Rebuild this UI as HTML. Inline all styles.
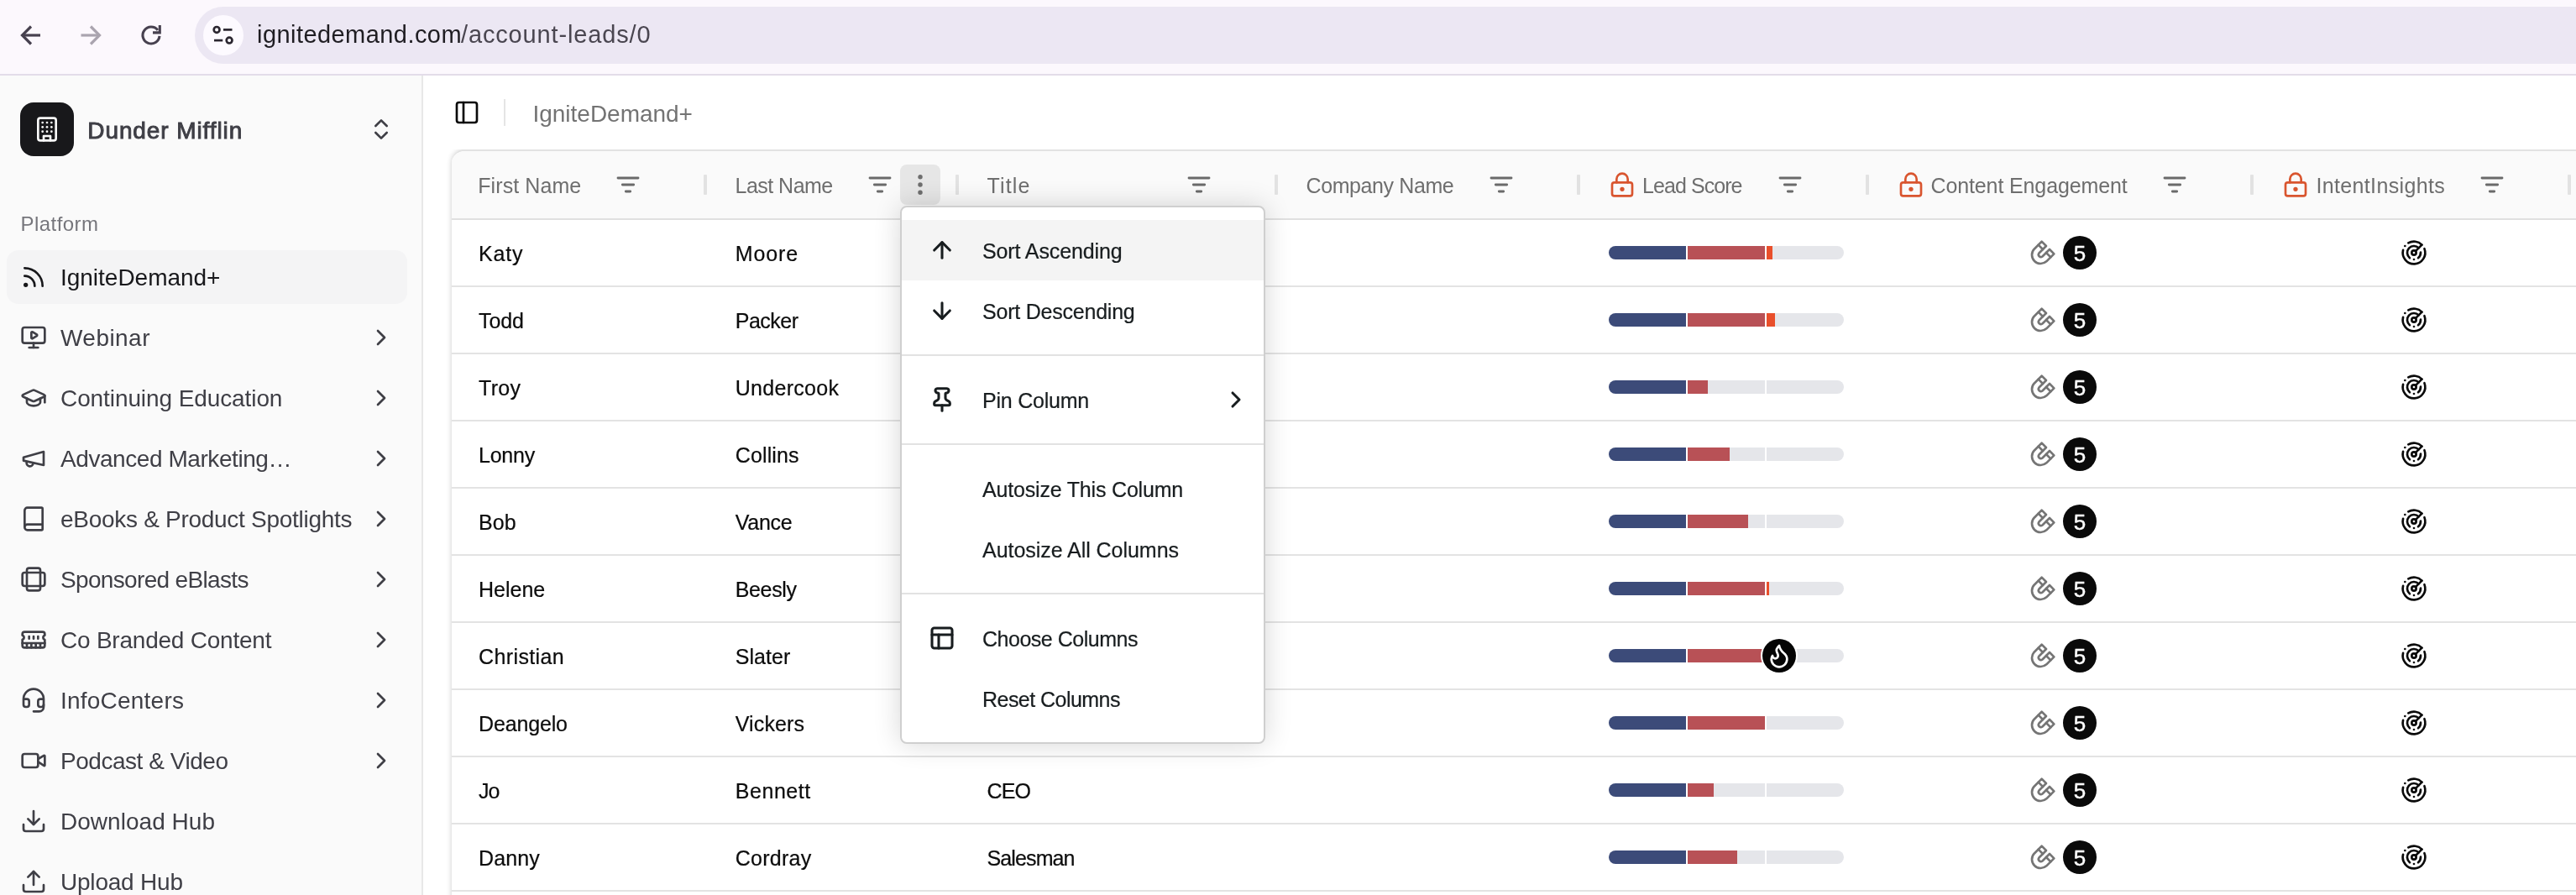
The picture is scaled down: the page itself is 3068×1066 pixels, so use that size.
<!DOCTYPE html>
<html><head><meta charset="utf-8"><title>IgniteDemand+</title>
<style>
html,body{margin:0;padding:0;}
body{width:3068px;height:1066px;overflow:hidden;position:relative;background:#fff;font-family:"Liberation Sans",sans-serif;}
.t{position:absolute;white-space:nowrap;}
.i{position:absolute;overflow:visible;}
.b{position:absolute;}
#root{position:absolute;left:0;top:0;width:3068px;height:1066px;overflow:hidden;will-change:transform;}
</style></head><body><div id="root">
<div class="b" style="left:0px;top:0px;width:3068px;height:88px;background:#fcf8fd;"></div>
<div class="b" style="left:0px;top:88px;width:3068px;height:2px;background:#e3dce9;"></div>
<div class="b" style="left:232px;top:8px;width:2900px;height:68px;background:#ece7f3;border-radius:34px;"></div>
<div class="b" style="left:242px;top:18px;width:48px;height:48px;background:#fdfaff;border-radius:24px;"></div>
<svg class="i" style="left:17px;top:22px" width="40" height="40" viewBox="0 0 40 40" fill="none" stroke="#47414f" stroke-width="3.2" stroke-linecap="butt" stroke-linejoin="miter"><path d="M31 20H10"/><path d="M20 9.500L9.500 20 20 30.500"/></svg>
<svg class="i" style="left:87.500px;top:22px" width="40" height="40" viewBox="0 0 40 40" fill="none" stroke="#aaa4af" stroke-width="3.2" stroke-linecap="butt" stroke-linejoin="miter"><path d="M8.500 20H30"/><path d="M20 9.500L30.500 20 20 30.500"/></svg>
<svg class="i" style="left:160px;top:22px" width="40" height="40" viewBox="0 0 40 40" fill="none" stroke="#47414f" stroke-width="3.100" stroke-linecap="butt" stroke-linejoin="miter"><path d="M29.960 20.870A10 10 0 1 1 27.880 13.840"/><path d="M30.300 8V16.900H22"/></svg>
<svg class="i" style="left:250px;top:26px" width="32" height="32" viewBox="0 0 32 32" fill="none" stroke="#2b2630" stroke-width="2.700" stroke-linecap="butt"><circle cx="8.100" cy="9.400" r="3.400"/><path d="M16 9.400h10.500"/><circle cx="23.100" cy="22.100" r="3.400"/><path d="M5 22.100h10.250"/></svg>
<div class="t" style="left:306.00px;top:21.45px;font-size:29px;line-height:41px;color:#1f1d22;letter-spacing:0.438px;">ignitedemand.com</div>
<div class="t" style="left:549.00px;top:21.45px;font-size:29px;line-height:41px;color:#4a4650;letter-spacing:0.848px;">/account-leads/0</div>
<div class="b" style="left:0px;top:90px;width:502px;height:976px;background:#fafafa;"></div>
<div class="b" style="left:502px;top:90px;width:2px;height:976px;background:#e8e8e8;"></div>
<div class="b" style="left:24px;top:122px;width:64px;height:64px;background:#18181b;border-radius:16px;"></div>
<svg class="i" style="left:40.00px;top:138.00px;" width="32" height="32" viewBox="0 0 24 24" fill="none" stroke="#fafafa" stroke-width="2" stroke-linecap="round" stroke-linejoin="round"><g><rect width="16" height="20" x="4" y="2" rx="2" ry="2"/><path d="M9 22v-4h6v4"/><path d="M8 6h.01"/><path d="M16 6h.01"/><path d="M12 6h.01"/><path d="M12 10h.01"/><path d="M12 14h.01"/><path d="M16 10h.01"/><path d="M16 14h.01"/><path d="M8 10h.01"/><path d="M8 14h.01"/></g></svg>
<div class="t" style="left:104.30px;top:135.80px;font-size:28px;line-height:39px;color:#3f3f46;letter-spacing:0.903px;-webkit-text-stroke:0.950px #3f3f46;">Dunder Mifflin</div>
<svg class="i" style="left:437.50px;top:138.00px;" width="32" height="32" viewBox="0 0 24 24" fill="none" stroke="#3f3f46" stroke-width="2" stroke-linecap="round" stroke-linejoin="round"><g><path d="m7 15 5 5 5-5"/><path d="m7 9 5-5 5 5"/></g></svg>
<div class="t" style="left:24.50px;top:249.93px;font-size:24px;line-height:34px;color:#76767c;letter-spacing:0.446px;">Platform</div>
<div class="b" style="left:8px;top:298px;width:477px;height:64px;background:#f4f4f5;border-radius:14px;"></div>
<svg class="i" style="left:24.00px;top:314.00px;" width="32" height="32" viewBox="0 0 24 24" fill="none" stroke="#18181b" stroke-width="2" stroke-linecap="round" stroke-linejoin="round"><g><path d="M4 11a9 9 0 0 1 9 9"/><path d="M4 4a16 16 0 0 1 16 16"/><circle cx="5" cy="19" r="1"/></g></svg>
<div class="t" style="left:72px;top:311.30px;font-size:28px;line-height:40px;color:#18181b;letter-spacing:-0.020px">IgniteDemand+</div>
<svg class="i" style="left:24.00px;top:386.00px;" width="32" height="32" viewBox="0 0 24 24" fill="none" stroke="#3f3f46" stroke-width="2" stroke-linecap="round" stroke-linejoin="round"><g><path d="M10 7.75a.75.75 0 0 1 1.142-.638l3.664 2.249a.75.75 0 0 1 0 1.278l-3.664 2.250a.75.75 0 0 1-1.142-.64z"/><path d="M12 17v4"/><path d="M8 21h8"/><rect x="2" y="3" width="20" height="14" rx="2"/></g></svg>
<div class="t" style="left:72px;top:383.30px;font-size:28px;line-height:40px;color:#3f3f46;letter-spacing:0.453px">Webinar</div>
<svg class="i" style="left:437.50px;top:386.00px;" width="32" height="32" viewBox="0 0 24 24" fill="none" stroke="#3f3f46" stroke-width="2" stroke-linecap="round" stroke-linejoin="round"><g><path d="m9 18 6-6-6-6"/></g></svg>
<svg class="i" style="left:24.00px;top:458.00px;" width="32" height="32" viewBox="0 0 24 24" fill="none" stroke="#3f3f46" stroke-width="2" stroke-linecap="round" stroke-linejoin="round"><g><path d="M21.42 10.922a1 1 0 0 0-.019-1.838L12.830 5.180a2 2 0 0 0-1.660 0L2.600 9.080a1 1 0 0 0 0 1.832l8.570 3.908a2 2 0 0 0 1.660 0z"/><path d="M22 10v6"/><path d="M6 12.500V16a6 3 0 0 0 12 0v-3.500"/></g></svg>
<div class="t" style="left:72px;top:455.30px;font-size:28px;line-height:40px;color:#3f3f46;letter-spacing:-0.092px">Continuing Education</div>
<svg class="i" style="left:437.50px;top:458.00px;" width="32" height="32" viewBox="0 0 24 24" fill="none" stroke="#3f3f46" stroke-width="2" stroke-linecap="round" stroke-linejoin="round"><g><path d="m9 18 6-6-6-6"/></g></svg>
<svg class="i" style="left:24.00px;top:530.00px;" width="32" height="32" viewBox="0 0 24 24" fill="none" stroke="#3f3f46" stroke-width="2" stroke-linecap="round" stroke-linejoin="round"><g><path d="m3 11 18-5v12L3 14v-3z"/><path d="M11.600 16.800a3 3 0 1 1-5.800-1.600"/></g></svg>
<div class="t" style="left:72px;top:527.30px;font-size:28px;line-height:40px;color:#3f3f46;letter-spacing:-0.434px">Advanced Marketing…</div>
<svg class="i" style="left:437.50px;top:530.00px;" width="32" height="32" viewBox="0 0 24 24" fill="none" stroke="#3f3f46" stroke-width="2" stroke-linecap="round" stroke-linejoin="round"><g><path d="m9 18 6-6-6-6"/></g></svg>
<svg class="i" style="left:24.00px;top:602.00px;" width="32" height="32" viewBox="0 0 24 24" fill="none" stroke="#3f3f46" stroke-width="2" stroke-linecap="round" stroke-linejoin="round"><g><path d="M4 19.500v-15A2.500 2.500 0 0 1 6.500 2H19a1 1 0 0 1 1 1v18a1 1 0 0 1-1 1H6.500a1 1 0 0 1 0-5H20"/></g></svg>
<div class="t" style="left:72px;top:599.30px;font-size:28px;line-height:40px;color:#3f3f46;letter-spacing:-0.285px">eBooks &amp; Product Spotlights</div>
<svg class="i" style="left:437.50px;top:602.00px;" width="32" height="32" viewBox="0 0 24 24" fill="none" stroke="#3f3f46" stroke-width="2" stroke-linecap="round" stroke-linejoin="round"><g><path d="m9 18 6-6-6-6"/></g></svg>
<svg class="i" style="left:24.00px;top:674.00px;" width="32" height="32" viewBox="0 0 24 24" fill="none" stroke="#3f3f46" stroke-width="2" stroke-linecap="round" stroke-linejoin="round"><g><rect width="12" height="20" x="6" y="2" rx="2"/><rect width="20" height="12" x="2" y="6" rx="2"/></g></svg>
<div class="t" style="left:72px;top:671.30px;font-size:28px;line-height:40px;color:#3f3f46;letter-spacing:-0.661px">Sponsored eBlasts</div>
<svg class="i" style="left:437.50px;top:674.00px;" width="32" height="32" viewBox="0 0 24 24" fill="none" stroke="#3f3f46" stroke-width="2" stroke-linecap="round" stroke-linejoin="round"><g><path d="m9 18 6-6-6-6"/></g></svg>
<svg class="i" style="left:24.00px;top:746.00px;" width="32" height="32" viewBox="0 0 24 24" fill="none" stroke="#3f3f46" stroke-width="2" stroke-linecap="round" stroke-linejoin="round"><g><path d="M6 19v-3"/><path d="M10 19v-3"/><path d="M14 19v-3"/><path d="M18 19v-3"/><path d="M8 11V9"/><path d="M16 11V9"/><path d="M12 11V9"/><path d="M2 15h20"/><path d="M2 7a2 2 0 0 1 2-2h16a2 2 0 0 1 2 2v1.100a2 2 0 0 0 0 3.837V17a2 2 0 0 1-2 2H4a2 2 0 0 1-2-2v-5.100a2 2 0 0 0 0-3.837Z"/></g></svg>
<div class="t" style="left:72px;top:743.30px;font-size:28px;line-height:40px;color:#3f3f46;letter-spacing:-0.226px">Co Branded Content</div>
<svg class="i" style="left:437.50px;top:746.00px;" width="32" height="32" viewBox="0 0 24 24" fill="none" stroke="#3f3f46" stroke-width="2" stroke-linecap="round" stroke-linejoin="round"><g><path d="m9 18 6-6-6-6"/></g></svg>
<svg class="i" style="left:24.00px;top:818.00px;" width="32" height="32" viewBox="0 0 24 24" fill="none" stroke="#3f3f46" stroke-width="2" stroke-linecap="round" stroke-linejoin="round"><g><path d="M3 11h3a2 2 0 0 1 2 2v3a2 2 0 0 1-2 2H5a2 2 0 0 1-2-2v-5Zm0 0a9 9 0 1 1 18 0m0 0v5a2 2 0 0 1-2 2h-1a2 2 0 0 1-2-2v-3a2 2 0 0 1 2-2h3Z"/><path d="M21 16v2a4 4 0 0 1-4 4h-5"/></g></svg>
<div class="t" style="left:72px;top:815.30px;font-size:28px;line-height:40px;color:#3f3f46;letter-spacing:0.222px">InfoCenters</div>
<svg class="i" style="left:437.50px;top:818.00px;" width="32" height="32" viewBox="0 0 24 24" fill="none" stroke="#3f3f46" stroke-width="2" stroke-linecap="round" stroke-linejoin="round"><g><path d="m9 18 6-6-6-6"/></g></svg>
<svg class="i" style="left:24.00px;top:890.00px;" width="32" height="32" viewBox="0 0 24 24" fill="none" stroke="#3f3f46" stroke-width="2" stroke-linecap="round" stroke-linejoin="round"><g><path d="m16 13 5.223 3.482a.5.5 0 0 0 .777-.416V7.870a.5.5 0 0 0-.752-.432L16 10.500"/><rect x="2" y="6" width="14" height="12" rx="2"/></g></svg>
<div class="t" style="left:72px;top:887.30px;font-size:28px;line-height:40px;color:#3f3f46;letter-spacing:-0.468px">Podcast &amp; Video</div>
<svg class="i" style="left:437.50px;top:890.00px;" width="32" height="32" viewBox="0 0 24 24" fill="none" stroke="#3f3f46" stroke-width="2" stroke-linecap="round" stroke-linejoin="round"><g><path d="m9 18 6-6-6-6"/></g></svg>
<svg class="i" style="left:24.00px;top:962.00px;" width="32" height="32" viewBox="0 0 24 24" fill="none" stroke="#3f3f46" stroke-width="2" stroke-linecap="round" stroke-linejoin="round"><g><path d="M21 15v4a2 2 0 0 1-2 2H5a2 2 0 0 1-2-2v-4"/><polyline points="7 10 12 15 17 10"/><line x1="12" x2="12" y1="15" y2="3"/></g></svg>
<div class="t" style="left:72px;top:959.30px;font-size:28px;line-height:40px;color:#3f3f46;letter-spacing:0.027px">Download Hub</div>
<svg class="i" style="left:24.00px;top:1034.00px;" width="32" height="32" viewBox="0 0 24 24" fill="none" stroke="#3f3f46" stroke-width="2" stroke-linecap="round" stroke-linejoin="round"><g><path d="M21 15v4a2 2 0 0 1-2 2H5a2 2 0 0 1-2-2v-4"/><polyline points="17 8 12 3 7 8"/><line x1="12" x2="12" y1="3" y2="15"/></g></svg>
<div class="t" style="left:72px;top:1031.30px;font-size:28px;line-height:40px;color:#3f3f46;letter-spacing:-0.212px">Upload Hub</div>
<svg class="i" style="left:539.75px;top:118.00px;" width="32" height="32" viewBox="0 0 24 24" fill="none" stroke="#0a0a0a" stroke-width="2" stroke-linecap="round" stroke-linejoin="round"><g><rect width="18" height="18" x="3" y="3" rx="2"/><path d="M9 3v18"/></g></svg>
<div class="b" style="left:600px;top:118px;width:2px;height:32px;background:#e5e5e5;"></div>
<div class="t" style="left:634.50px;top:115.80px;font-size:28px;line-height:39px;color:#737373;letter-spacing:-0.020px;">IgniteDemand+</div>
<div class="b" style="left:517px;top:178px;width:2600px;height:960px;clip-path:inset(0 0 0 0)"><div style="position:absolute;left:20.500px;top:0;width:2600px;height:960px;border-top:2px solid #e2e2e2;border-radius:16px 0 0 0;background:#fff;box-sizing:border-box;overflow:hidden;box-shadow:0 0 6px rgba(0,0,0,0.21)"><div style="height:80px;background:#fafafa;border-bottom:2px solid #e0e0e0"></div></div></div>
<div class="b" style="left:537.5px;top:340px;width:2600px;height:2px;background:#e3e3e3;"></div>
<div class="b" style="left:537.5px;top:420px;width:2600px;height:2px;background:#e3e3e3;"></div>
<div class="b" style="left:537.5px;top:500px;width:2600px;height:2px;background:#e3e3e3;"></div>
<div class="b" style="left:537.5px;top:580px;width:2600px;height:2px;background:#e3e3e3;"></div>
<div class="b" style="left:537.5px;top:660px;width:2600px;height:2px;background:#e3e3e3;"></div>
<div class="b" style="left:537.5px;top:740px;width:2600px;height:2px;background:#e3e3e3;"></div>
<div class="b" style="left:537.5px;top:820px;width:2600px;height:2px;background:#e3e3e3;"></div>
<div class="b" style="left:537.5px;top:900px;width:2600px;height:2px;background:#e3e3e3;"></div>
<div class="b" style="left:537.5px;top:980px;width:2600px;height:2px;background:#e3e3e3;"></div>
<div class="b" style="left:537.5px;top:1060px;width:2600px;height:2px;background:#e3e3e3;"></div>
<div class="t" style="left:569.25px;top:203.84px;font-size:25px;line-height:35px;color:#6e6e6e;letter-spacing:0.085px;">First Name</div>
<svg class="i" style="left:731.50px;top:203.50px;" width="32" height="32" viewBox="0 0 24 24" fill="none" stroke="#6a6a6a" stroke-width="2.15" stroke-linecap="round" stroke-linejoin="round"><g><path d="M3 6h18"/><path d="M7 12h10"/><path d="M10 18h4"/></g></svg>
<div class="t" style="left:875.50px;top:203.84px;font-size:25px;line-height:35px;color:#6e6e6e;letter-spacing:-0.520px;">Last Name</div>
<svg class="i" style="left:1031.50px;top:203.50px;" width="32" height="32" viewBox="0 0 24 24" fill="none" stroke="#6a6a6a" stroke-width="2.15" stroke-linecap="round" stroke-linejoin="round"><g><path d="M3 6h18"/><path d="M7 12h10"/><path d="M10 18h4"/></g></svg>
<div class="t" style="left:1175.50px;top:203.84px;font-size:25px;line-height:35px;color:#6e6e6e;letter-spacing:1.176px;">Title</div>
<svg class="i" style="left:1411.50px;top:203.50px;" width="32" height="32" viewBox="0 0 24 24" fill="none" stroke="#6a6a6a" stroke-width="2.15" stroke-linecap="round" stroke-linejoin="round"><g><path d="M3 6h18"/><path d="M7 12h10"/><path d="M10 18h4"/></g></svg>
<div class="t" style="left:1555.50px;top:203.84px;font-size:25px;line-height:35px;color:#6e6e6e;letter-spacing:-0.399px;">Company Name</div>
<svg class="i" style="left:1772.00px;top:203.50px;" width="32" height="32" viewBox="0 0 24 24" fill="none" stroke="#6a6a6a" stroke-width="2.15" stroke-linecap="round" stroke-linejoin="round"><g><path d="M3 6h18"/><path d="M7 12h10"/><path d="M10 18h4"/></g></svg>
<div class="t" style="left:1956.00px;top:203.84px;font-size:25px;line-height:35px;color:#6e6e6e;letter-spacing:-0.932px;">Lead Score</div>
<svg class="i" style="left:2115.50px;top:203.50px;" width="32" height="32" viewBox="0 0 24 24" fill="none" stroke="#6a6a6a" stroke-width="2.15" stroke-linecap="round" stroke-linejoin="round"><g><path d="M3 6h18"/><path d="M7 12h10"/><path d="M10 18h4"/></g></svg>
<svg class="i" style="left:1915.50px;top:203.50px;" width="32" height="32" viewBox="0 0 24 24" fill="none" stroke="#d9552f" stroke-width="2" stroke-linecap="round" stroke-linejoin="round"><g><circle cx="12" cy="16" r="1"/><rect x="3" y="10" width="18" height="12" rx="2"/><path d="M7 10V7a5 5 0 0 1 10 0v3"/></g></svg>
<div class="t" style="left:2299.50px;top:203.84px;font-size:25px;line-height:35px;color:#6e6e6e;letter-spacing:-0.122px;">Content Engagement</div>
<svg class="i" style="left:2574.00px;top:203.50px;" width="32" height="32" viewBox="0 0 24 24" fill="none" stroke="#6a6a6a" stroke-width="2.15" stroke-linecap="round" stroke-linejoin="round"><g><path d="M3 6h18"/><path d="M7 12h10"/><path d="M10 18h4"/></g></svg>
<svg class="i" style="left:2260.25px;top:203.50px;" width="32" height="32" viewBox="0 0 24 24" fill="none" stroke="#d9552f" stroke-width="2" stroke-linecap="round" stroke-linejoin="round"><g><circle cx="12" cy="16" r="1"/><rect x="3" y="10" width="18" height="12" rx="2"/><path d="M7 10V7a5 5 0 0 1 10 0v3"/></g></svg>
<div class="t" style="left:2758.50px;top:203.84px;font-size:25px;line-height:35px;color:#6e6e6e;letter-spacing:0.346px;">IntentInsights</div>
<svg class="i" style="left:2951.50px;top:203.50px;" width="32" height="32" viewBox="0 0 24 24" fill="none" stroke="#6a6a6a" stroke-width="2.15" stroke-linecap="round" stroke-linejoin="round"><g><path d="M3 6h18"/><path d="M7 12h10"/><path d="M10 18h4"/></g></svg>
<svg class="i" style="left:2717.50px;top:203.50px;" width="32" height="32" viewBox="0 0 24 24" fill="none" stroke="#d9552f" stroke-width="2" stroke-linecap="round" stroke-linejoin="round"><g><circle cx="12" cy="16" r="1"/><rect x="3" y="10" width="18" height="12" rx="2"/><path d="M7 10V7a5 5 0 0 1 10 0v3"/></g></svg>
<div class="b" style="left:837.75px;top:208px;width:4px;height:24px;background:#e2e2e2;border-radius:1px;"></div>
<div class="b" style="left:1137.75px;top:208px;width:4px;height:24px;background:#e2e2e2;border-radius:1px;"></div>
<div class="b" style="left:1517.75px;top:208px;width:4px;height:24px;background:#e2e2e2;border-radius:1px;"></div>
<div class="b" style="left:1877.75px;top:208px;width:4px;height:24px;background:#e2e2e2;border-radius:1px;"></div>
<div class="b" style="left:2221.5px;top:208px;width:4px;height:24px;background:#e2e2e2;border-radius:1px;"></div>
<div class="b" style="left:2680px;top:208px;width:4px;height:24px;background:#e2e2e2;border-radius:1px;"></div>
<div class="b" style="left:3057.75px;top:208px;width:4px;height:24px;background:#e2e2e2;border-radius:1px;"></div>
<div class="b" style="left:1072px;top:196px;width:48px;height:48px;background:#e6e6e6;border-radius:8px;"></div>
<svg class="i" style="left:1079.50px;top:204.00px;" width="32" height="32" viewBox="0 0 24 24" fill="none" stroke="#6e6e6e" stroke-width="2.1" stroke-linecap="round" stroke-linejoin="round"><g><circle cx="12" cy="12" r="1"/><circle cx="12" cy="5" r="1"/><circle cx="12" cy="19" r="1"/></g></svg>
<div class="t" style="left:570.00px;top:284.59px;font-size:25px;line-height:35px;color:#0c0c0c;letter-spacing:0.823px;-webkit-text-stroke:0.220px currentColor;">Katy</div>
<div class="t" style="left:875.75px;top:284.59px;font-size:25px;line-height:35px;color:#0c0c0c;letter-spacing:0.906px;-webkit-text-stroke:0.220px currentColor;">Moore</div>
<div class="b" style="left:1915.75px;top:292.5px;width:280px;height:16px;border-radius:8px;overflow:hidden;background:#fff"><div style="position:absolute;left:0;top:0;width:92px;height:16px;background:#3c4b79"></div><div style="position:absolute;left:94px;top:0;width:92px;height:16px;background:#e5e6ea"></div><div style="position:absolute;left:94px;top:0;width:92px;height:16px;background:#b85156"></div><div style="position:absolute;left:188px;top:0;width:92px;height:16px;background:#e5e6ea"></div><div style="position:absolute;left:188px;top:0;width:7.5px;height:16px;background:#e94f2b"></div></div>
<svg class="i" style="left:2417.00px;top:284.50px;" width="32" height="32" viewBox="0 0 24 24" fill="none" stroke="#757575" stroke-width="2" stroke-linecap="round" stroke-linejoin="round"><g transform="rotate(180 12 12)"><path d="m6 15-4-4 6.750-6.770a7.790 7.790 0 0 1 11 11L13 22l-4-4 6.390-6.360a2.140 2.140 0 0 0-3-3L6 15"/><path d="m5 8 4 4"/><path d="m12 15 4 4"/></g></svg>
<div class="b" style="left:2457px;top:280.5px;width:40px;height:40px;background:#0a0a0a;border-radius:20px;"></div>
<div class="t" style="left:2457px;top:280.5px;width:40px;text-align:center;font-size:26px;line-height:42px;color:#fff;-webkit-text-stroke:0.450px #fff">5</div>
<svg class="i" style="left:2858.50px;top:284.50px;" width="32" height="32" viewBox="0 0 24 24" fill="none" stroke="#0a0a0a" stroke-width="2" stroke-linecap="round" stroke-linejoin="round"><g><path d="M19.070 4.930A10 10 0 0 0 6.990 3.340"/><path d="M4 6h.01"/><path d="M2.290 9.620A10 10 0 1 0 21.310 8.350"/><path d="M16.240 7.760A6 6 0 1 0 8.230 16.670"/><path d="M12 18h.01"/><path d="M17.990 11.660A6 6 0 0 1 15.770 16.670"/><circle cx="12" cy="12" r="2"/><path d="m13.410 10.590 5.660-5.660"/></g></svg>
<div class="t" style="left:570.00px;top:364.59px;font-size:25px;line-height:35px;color:#0c0c0c;letter-spacing:-0.073px;-webkit-text-stroke:0.220px currentColor;">Todd</div>
<div class="t" style="left:875.75px;top:364.59px;font-size:25px;line-height:35px;color:#0c0c0c;letter-spacing:-0.512px;-webkit-text-stroke:0.220px currentColor;">Packer</div>
<div class="b" style="left:1915.75px;top:372.5px;width:280px;height:16px;border-radius:8px;overflow:hidden;background:#fff"><div style="position:absolute;left:0;top:0;width:92px;height:16px;background:#3c4b79"></div><div style="position:absolute;left:94px;top:0;width:92px;height:16px;background:#e5e6ea"></div><div style="position:absolute;left:94px;top:0;width:92px;height:16px;background:#b85156"></div><div style="position:absolute;left:188px;top:0;width:92px;height:16px;background:#e5e6ea"></div><div style="position:absolute;left:188px;top:0;width:10px;height:16px;background:#e94f2b"></div></div>
<svg class="i" style="left:2417.00px;top:364.50px;" width="32" height="32" viewBox="0 0 24 24" fill="none" stroke="#757575" stroke-width="2" stroke-linecap="round" stroke-linejoin="round"><g transform="rotate(180 12 12)"><path d="m6 15-4-4 6.750-6.770a7.790 7.790 0 0 1 11 11L13 22l-4-4 6.390-6.360a2.140 2.140 0 0 0-3-3L6 15"/><path d="m5 8 4 4"/><path d="m12 15 4 4"/></g></svg>
<div class="b" style="left:2457px;top:360.5px;width:40px;height:40px;background:#0a0a0a;border-radius:20px;"></div>
<div class="t" style="left:2457px;top:360.5px;width:40px;text-align:center;font-size:26px;line-height:42px;color:#fff;-webkit-text-stroke:0.450px #fff">5</div>
<svg class="i" style="left:2858.50px;top:364.50px;" width="32" height="32" viewBox="0 0 24 24" fill="none" stroke="#0a0a0a" stroke-width="2" stroke-linecap="round" stroke-linejoin="round"><g><path d="M19.070 4.930A10 10 0 0 0 6.990 3.340"/><path d="M4 6h.01"/><path d="M2.290 9.620A10 10 0 1 0 21.310 8.350"/><path d="M16.240 7.760A6 6 0 1 0 8.230 16.670"/><path d="M12 18h.01"/><path d="M17.990 11.660A6 6 0 0 1 15.770 16.670"/><circle cx="12" cy="12" r="2"/><path d="m13.410 10.590 5.660-5.660"/></g></svg>
<div class="t" style="left:570.00px;top:444.59px;font-size:25px;line-height:35px;color:#0c0c0c;letter-spacing:0.307px;-webkit-text-stroke:0.220px currentColor;">Troy</div>
<div class="t" style="left:875.75px;top:444.59px;font-size:25px;line-height:35px;color:#0c0c0c;letter-spacing:0.293px;-webkit-text-stroke:0.220px currentColor;">Undercook</div>
<div class="b" style="left:1915.75px;top:452.5px;width:280px;height:16px;border-radius:8px;overflow:hidden;background:#fff"><div style="position:absolute;left:0;top:0;width:92px;height:16px;background:#3c4b79"></div><div style="position:absolute;left:94px;top:0;width:92px;height:16px;background:#e5e6ea"></div><div style="position:absolute;left:94px;top:0;width:24px;height:16px;background:#b85156"></div><div style="position:absolute;left:188px;top:0;width:92px;height:16px;background:#e5e6ea"></div></div>
<svg class="i" style="left:2417.00px;top:444.50px;" width="32" height="32" viewBox="0 0 24 24" fill="none" stroke="#757575" stroke-width="2" stroke-linecap="round" stroke-linejoin="round"><g transform="rotate(180 12 12)"><path d="m6 15-4-4 6.750-6.770a7.790 7.790 0 0 1 11 11L13 22l-4-4 6.390-6.360a2.140 2.140 0 0 0-3-3L6 15"/><path d="m5 8 4 4"/><path d="m12 15 4 4"/></g></svg>
<div class="b" style="left:2457px;top:440.5px;width:40px;height:40px;background:#0a0a0a;border-radius:20px;"></div>
<div class="t" style="left:2457px;top:440.5px;width:40px;text-align:center;font-size:26px;line-height:42px;color:#fff;-webkit-text-stroke:0.450px #fff">5</div>
<svg class="i" style="left:2858.50px;top:444.50px;" width="32" height="32" viewBox="0 0 24 24" fill="none" stroke="#0a0a0a" stroke-width="2" stroke-linecap="round" stroke-linejoin="round"><g><path d="M19.070 4.930A10 10 0 0 0 6.990 3.340"/><path d="M4 6h.01"/><path d="M2.290 9.620A10 10 0 1 0 21.310 8.350"/><path d="M16.240 7.760A6 6 0 1 0 8.230 16.670"/><path d="M12 18h.01"/><path d="M17.990 11.660A6 6 0 0 1 15.770 16.670"/><circle cx="12" cy="12" r="2"/><path d="m13.410 10.590 5.660-5.660"/></g></svg>
<div class="t" style="left:570.00px;top:524.59px;font-size:25px;line-height:35px;color:#0c0c0c;letter-spacing:-0.219px;-webkit-text-stroke:0.220px currentColor;">Lonny</div>
<div class="t" style="left:875.75px;top:524.59px;font-size:25px;line-height:35px;color:#0c0c0c;letter-spacing:0.125px;-webkit-text-stroke:0.220px currentColor;">Collins</div>
<div class="b" style="left:1915.75px;top:532.5px;width:280px;height:16px;border-radius:8px;overflow:hidden;background:#fff"><div style="position:absolute;left:0;top:0;width:92px;height:16px;background:#3c4b79"></div><div style="position:absolute;left:94px;top:0;width:92px;height:16px;background:#e5e6ea"></div><div style="position:absolute;left:94px;top:0;width:50px;height:16px;background:#b85156"></div><div style="position:absolute;left:188px;top:0;width:92px;height:16px;background:#e5e6ea"></div></div>
<svg class="i" style="left:2417.00px;top:524.50px;" width="32" height="32" viewBox="0 0 24 24" fill="none" stroke="#757575" stroke-width="2" stroke-linecap="round" stroke-linejoin="round"><g transform="rotate(180 12 12)"><path d="m6 15-4-4 6.750-6.770a7.790 7.790 0 0 1 11 11L13 22l-4-4 6.390-6.360a2.140 2.140 0 0 0-3-3L6 15"/><path d="m5 8 4 4"/><path d="m12 15 4 4"/></g></svg>
<div class="b" style="left:2457px;top:520.5px;width:40px;height:40px;background:#0a0a0a;border-radius:20px;"></div>
<div class="t" style="left:2457px;top:520.5px;width:40px;text-align:center;font-size:26px;line-height:42px;color:#fff;-webkit-text-stroke:0.450px #fff">5</div>
<svg class="i" style="left:2858.50px;top:524.50px;" width="32" height="32" viewBox="0 0 24 24" fill="none" stroke="#0a0a0a" stroke-width="2" stroke-linecap="round" stroke-linejoin="round"><g><path d="M19.070 4.930A10 10 0 0 0 6.990 3.340"/><path d="M4 6h.01"/><path d="M2.290 9.620A10 10 0 1 0 21.310 8.350"/><path d="M16.240 7.760A6 6 0 1 0 8.230 16.670"/><path d="M12 18h.01"/><path d="M17.990 11.660A6 6 0 0 1 15.770 16.670"/><circle cx="12" cy="12" r="2"/><path d="m13.410 10.590 5.660-5.660"/></g></svg>
<div class="t" style="left:570.00px;top:604.59px;font-size:25px;line-height:35px;color:#0c0c0c;letter-spacing:0.133px;-webkit-text-stroke:0.220px currentColor;">Bob</div>
<div class="t" style="left:875.75px;top:604.59px;font-size:25px;line-height:35px;color:#0c0c0c;letter-spacing:-0.258px;-webkit-text-stroke:0.220px currentColor;">Vance</div>
<div class="b" style="left:1915.75px;top:612.5px;width:280px;height:16px;border-radius:8px;overflow:hidden;background:#fff"><div style="position:absolute;left:0;top:0;width:92px;height:16px;background:#3c4b79"></div><div style="position:absolute;left:94px;top:0;width:92px;height:16px;background:#e5e6ea"></div><div style="position:absolute;left:94px;top:0;width:72px;height:16px;background:#b85156"></div><div style="position:absolute;left:188px;top:0;width:92px;height:16px;background:#e5e6ea"></div></div>
<svg class="i" style="left:2417.00px;top:604.50px;" width="32" height="32" viewBox="0 0 24 24" fill="none" stroke="#757575" stroke-width="2" stroke-linecap="round" stroke-linejoin="round"><g transform="rotate(180 12 12)"><path d="m6 15-4-4 6.750-6.770a7.790 7.790 0 0 1 11 11L13 22l-4-4 6.390-6.360a2.140 2.140 0 0 0-3-3L6 15"/><path d="m5 8 4 4"/><path d="m12 15 4 4"/></g></svg>
<div class="b" style="left:2457px;top:600.5px;width:40px;height:40px;background:#0a0a0a;border-radius:20px;"></div>
<div class="t" style="left:2457px;top:600.5px;width:40px;text-align:center;font-size:26px;line-height:42px;color:#fff;-webkit-text-stroke:0.450px #fff">5</div>
<svg class="i" style="left:2858.50px;top:604.50px;" width="32" height="32" viewBox="0 0 24 24" fill="none" stroke="#0a0a0a" stroke-width="2" stroke-linecap="round" stroke-linejoin="round"><g><path d="M19.070 4.930A10 10 0 0 0 6.990 3.340"/><path d="M4 6h.01"/><path d="M2.290 9.620A10 10 0 1 0 21.310 8.350"/><path d="M16.240 7.760A6 6 0 1 0 8.230 16.670"/><path d="M12 18h.01"/><path d="M17.990 11.660A6 6 0 0 1 15.770 16.670"/><circle cx="12" cy="12" r="2"/><path d="m13.410 10.590 5.660-5.660"/></g></svg>
<div class="t" style="left:570.00px;top:684.59px;font-size:25px;line-height:35px;color:#0c0c0c;letter-spacing:0.006px;-webkit-text-stroke:0.220px currentColor;">Helene</div>
<div class="t" style="left:875.75px;top:684.59px;font-size:25px;line-height:35px;color:#0c0c0c;letter-spacing:-0.356px;-webkit-text-stroke:0.220px currentColor;">Beesly</div>
<div class="b" style="left:1915.75px;top:692.5px;width:280px;height:16px;border-radius:8px;overflow:hidden;background:#fff"><div style="position:absolute;left:0;top:0;width:92px;height:16px;background:#3c4b79"></div><div style="position:absolute;left:94px;top:0;width:92px;height:16px;background:#e5e6ea"></div><div style="position:absolute;left:94px;top:0;width:92px;height:16px;background:#b85156"></div><div style="position:absolute;left:188px;top:0;width:92px;height:16px;background:#e5e6ea"></div><div style="position:absolute;left:188px;top:0;width:3px;height:16px;background:#e94f2b"></div></div>
<svg class="i" style="left:2417.00px;top:684.50px;" width="32" height="32" viewBox="0 0 24 24" fill="none" stroke="#757575" stroke-width="2" stroke-linecap="round" stroke-linejoin="round"><g transform="rotate(180 12 12)"><path d="m6 15-4-4 6.750-6.770a7.790 7.790 0 0 1 11 11L13 22l-4-4 6.390-6.360a2.140 2.140 0 0 0-3-3L6 15"/><path d="m5 8 4 4"/><path d="m12 15 4 4"/></g></svg>
<div class="b" style="left:2457px;top:680.5px;width:40px;height:40px;background:#0a0a0a;border-radius:20px;"></div>
<div class="t" style="left:2457px;top:680.5px;width:40px;text-align:center;font-size:26px;line-height:42px;color:#fff;-webkit-text-stroke:0.450px #fff">5</div>
<svg class="i" style="left:2858.50px;top:684.50px;" width="32" height="32" viewBox="0 0 24 24" fill="none" stroke="#0a0a0a" stroke-width="2" stroke-linecap="round" stroke-linejoin="round"><g><path d="M19.070 4.930A10 10 0 0 0 6.990 3.340"/><path d="M4 6h.01"/><path d="M2.290 9.620A10 10 0 1 0 21.310 8.350"/><path d="M16.240 7.760A6 6 0 1 0 8.230 16.670"/><path d="M12 18h.01"/><path d="M17.990 11.660A6 6 0 0 1 15.770 16.670"/><circle cx="12" cy="12" r="2"/><path d="m13.410 10.590 5.660-5.660"/></g></svg>
<div class="t" style="left:570.00px;top:764.59px;font-size:25px;line-height:35px;color:#0c0c0c;letter-spacing:0.389px;-webkit-text-stroke:0.220px currentColor;">Christian</div>
<div class="t" style="left:875.75px;top:764.59px;font-size:25px;line-height:35px;color:#0c0c0c;letter-spacing:0.037px;-webkit-text-stroke:0.220px currentColor;">Slater</div>
<div class="b" style="left:1915.75px;top:772.5px;width:280px;height:16px;border-radius:8px;overflow:hidden;background:#fff"><div style="position:absolute;left:0;top:0;width:92px;height:16px;background:#3c4b79"></div><div style="position:absolute;left:94px;top:0;width:92px;height:16px;background:#e5e6ea"></div><div style="position:absolute;left:94px;top:0;width:92px;height:16px;background:#b85156"></div><div style="position:absolute;left:188px;top:0;width:92px;height:16px;background:#e5e6ea"></div></div>
<div class="b" style="left:2096.5px;top:758.5px;width:44px;height:44px;background:#fff;border-radius:22px;"></div>
<div class="b" style="left:2098.5px;top:760.5px;width:40px;height:40px;background:#050505;border-radius:20px;"></div>
<svg class="i" style="left:2102.50px;top:764.50px;" width="32" height="32" viewBox="0 0 24 24" fill="none" stroke="#fff" stroke-width="2" stroke-linecap="round" stroke-linejoin="round"><g><path d="M8.5 14.5A2.5 2.5 0 0 0 11 12c0-1.38-.5-2-1-3-1.072-2.143-.224-4.054 2-6 .5 2.5 2 4.9 4 6.5 2 1.6 3 3.5 3 5.5a7 7 0 1 1-14 0c0-1.153.433-2.294 1-3a2.500 2.500 0 0 0 2.500 2.500z"/></g></svg>
<svg class="i" style="left:2417.00px;top:764.50px;" width="32" height="32" viewBox="0 0 24 24" fill="none" stroke="#757575" stroke-width="2" stroke-linecap="round" stroke-linejoin="round"><g transform="rotate(180 12 12)"><path d="m6 15-4-4 6.750-6.770a7.790 7.790 0 0 1 11 11L13 22l-4-4 6.390-6.360a2.140 2.140 0 0 0-3-3L6 15"/><path d="m5 8 4 4"/><path d="m12 15 4 4"/></g></svg>
<div class="b" style="left:2457px;top:760.5px;width:40px;height:40px;background:#0a0a0a;border-radius:20px;"></div>
<div class="t" style="left:2457px;top:760.5px;width:40px;text-align:center;font-size:26px;line-height:42px;color:#fff;-webkit-text-stroke:0.450px #fff">5</div>
<svg class="i" style="left:2858.50px;top:764.50px;" width="32" height="32" viewBox="0 0 24 24" fill="none" stroke="#0a0a0a" stroke-width="2" stroke-linecap="round" stroke-linejoin="round"><g><path d="M19.070 4.930A10 10 0 0 0 6.990 3.340"/><path d="M4 6h.01"/><path d="M2.290 9.620A10 10 0 1 0 21.310 8.350"/><path d="M16.240 7.760A6 6 0 1 0 8.230 16.670"/><path d="M12 18h.01"/><path d="M17.990 11.660A6 6 0 0 1 15.770 16.670"/><circle cx="12" cy="12" r="2"/><path d="m13.410 10.590 5.660-5.660"/></g></svg>
<div class="t" style="left:570.00px;top:844.59px;font-size:25px;line-height:35px;color:#0c0c0c;letter-spacing:-0.147px;-webkit-text-stroke:0.220px currentColor;">Deangelo</div>
<div class="t" style="left:875.75px;top:844.59px;font-size:25px;line-height:35px;color:#0c0c0c;letter-spacing:0.125px;-webkit-text-stroke:0.220px currentColor;">Vickers</div>
<div class="b" style="left:1915.75px;top:852.5px;width:280px;height:16px;border-radius:8px;overflow:hidden;background:#fff"><div style="position:absolute;left:0;top:0;width:92px;height:16px;background:#3c4b79"></div><div style="position:absolute;left:94px;top:0;width:92px;height:16px;background:#e5e6ea"></div><div style="position:absolute;left:94px;top:0;width:92px;height:16px;background:#b85156"></div><div style="position:absolute;left:188px;top:0;width:92px;height:16px;background:#e5e6ea"></div></div>
<svg class="i" style="left:2417.00px;top:844.50px;" width="32" height="32" viewBox="0 0 24 24" fill="none" stroke="#757575" stroke-width="2" stroke-linecap="round" stroke-linejoin="round"><g transform="rotate(180 12 12)"><path d="m6 15-4-4 6.750-6.770a7.790 7.790 0 0 1 11 11L13 22l-4-4 6.390-6.360a2.140 2.140 0 0 0-3-3L6 15"/><path d="m5 8 4 4"/><path d="m12 15 4 4"/></g></svg>
<div class="b" style="left:2457px;top:840.5px;width:40px;height:40px;background:#0a0a0a;border-radius:20px;"></div>
<div class="t" style="left:2457px;top:840.5px;width:40px;text-align:center;font-size:26px;line-height:42px;color:#fff;-webkit-text-stroke:0.450px #fff">5</div>
<svg class="i" style="left:2858.50px;top:844.50px;" width="32" height="32" viewBox="0 0 24 24" fill="none" stroke="#0a0a0a" stroke-width="2" stroke-linecap="round" stroke-linejoin="round"><g><path d="M19.070 4.930A10 10 0 0 0 6.990 3.340"/><path d="M4 6h.01"/><path d="M2.290 9.620A10 10 0 1 0 21.310 8.350"/><path d="M16.240 7.760A6 6 0 1 0 8.230 16.670"/><path d="M12 18h.01"/><path d="M17.990 11.660A6 6 0 0 1 15.770 16.670"/><circle cx="12" cy="12" r="2"/><path d="m13.410 10.590 5.660-5.660"/></g></svg>
<div class="t" style="left:570.00px;top:924.59px;font-size:25px;line-height:35px;color:#0c0c0c;letter-spacing:-0.906px;-webkit-text-stroke:0.220px currentColor;">Jo</div>
<div class="t" style="left:875.75px;top:924.59px;font-size:25px;line-height:35px;color:#0c0c0c;letter-spacing:0.549px;-webkit-text-stroke:0.220px currentColor;">Bennett</div>
<div class="t" style="left:1175.50px;top:924.59px;font-size:25px;line-height:35px;color:#0c0c0c;letter-spacing:-0.836px;-webkit-text-stroke:0.220px currentColor;">CEO</div>
<div class="b" style="left:1915.75px;top:932.5px;width:280px;height:16px;border-radius:8px;overflow:hidden;background:#fff"><div style="position:absolute;left:0;top:0;width:92px;height:16px;background:#3c4b79"></div><div style="position:absolute;left:94px;top:0;width:92px;height:16px;background:#e5e6ea"></div><div style="position:absolute;left:94px;top:0;width:31px;height:16px;background:#b85156"></div><div style="position:absolute;left:188px;top:0;width:92px;height:16px;background:#e5e6ea"></div></div>
<svg class="i" style="left:2417.00px;top:924.50px;" width="32" height="32" viewBox="0 0 24 24" fill="none" stroke="#757575" stroke-width="2" stroke-linecap="round" stroke-linejoin="round"><g transform="rotate(180 12 12)"><path d="m6 15-4-4 6.750-6.770a7.790 7.790 0 0 1 11 11L13 22l-4-4 6.390-6.360a2.140 2.140 0 0 0-3-3L6 15"/><path d="m5 8 4 4"/><path d="m12 15 4 4"/></g></svg>
<div class="b" style="left:2457px;top:920.5px;width:40px;height:40px;background:#0a0a0a;border-radius:20px;"></div>
<div class="t" style="left:2457px;top:920.5px;width:40px;text-align:center;font-size:26px;line-height:42px;color:#fff;-webkit-text-stroke:0.450px #fff">5</div>
<svg class="i" style="left:2858.50px;top:924.50px;" width="32" height="32" viewBox="0 0 24 24" fill="none" stroke="#0a0a0a" stroke-width="2" stroke-linecap="round" stroke-linejoin="round"><g><path d="M19.070 4.930A10 10 0 0 0 6.990 3.340"/><path d="M4 6h.01"/><path d="M2.290 9.620A10 10 0 1 0 21.310 8.350"/><path d="M16.240 7.760A6 6 0 1 0 8.230 16.670"/><path d="M12 18h.01"/><path d="M17.990 11.660A6 6 0 0 1 15.770 16.670"/><circle cx="12" cy="12" r="2"/><path d="m13.410 10.590 5.660-5.660"/></g></svg>
<div class="t" style="left:570.00px;top:1004.59px;font-size:25px;line-height:35px;color:#0c0c0c;letter-spacing:0.121px;-webkit-text-stroke:0.220px currentColor;">Danny</div>
<div class="t" style="left:875.75px;top:1004.59px;font-size:25px;line-height:35px;color:#0c0c0c;letter-spacing:0.263px;-webkit-text-stroke:0.220px currentColor;">Cordray</div>
<div class="t" style="left:1175.50px;top:1004.59px;font-size:25px;line-height:35px;color:#0c0c0c;letter-spacing:-0.882px;-webkit-text-stroke:0.220px currentColor;">Salesman</div>
<div class="b" style="left:1915.75px;top:1012.5px;width:280px;height:16px;border-radius:8px;overflow:hidden;background:#fff"><div style="position:absolute;left:0;top:0;width:92px;height:16px;background:#3c4b79"></div><div style="position:absolute;left:94px;top:0;width:92px;height:16px;background:#e5e6ea"></div><div style="position:absolute;left:94px;top:0;width:59px;height:16px;background:#b85156"></div><div style="position:absolute;left:188px;top:0;width:92px;height:16px;background:#e5e6ea"></div></div>
<svg class="i" style="left:2417.00px;top:1004.50px;" width="32" height="32" viewBox="0 0 24 24" fill="none" stroke="#757575" stroke-width="2" stroke-linecap="round" stroke-linejoin="round"><g transform="rotate(180 12 12)"><path d="m6 15-4-4 6.750-6.770a7.790 7.790 0 0 1 11 11L13 22l-4-4 6.390-6.360a2.140 2.140 0 0 0-3-3L6 15"/><path d="m5 8 4 4"/><path d="m12 15 4 4"/></g></svg>
<div class="b" style="left:2457px;top:1000.5px;width:40px;height:40px;background:#0a0a0a;border-radius:20px;"></div>
<div class="t" style="left:2457px;top:1000.5px;width:40px;text-align:center;font-size:26px;line-height:42px;color:#fff;-webkit-text-stroke:0.450px #fff">5</div>
<svg class="i" style="left:2858.50px;top:1004.50px;" width="32" height="32" viewBox="0 0 24 24" fill="none" stroke="#0a0a0a" stroke-width="2" stroke-linecap="round" stroke-linejoin="round"><g><path d="M19.070 4.930A10 10 0 0 0 6.990 3.340"/><path d="M4 6h.01"/><path d="M2.290 9.620A10 10 0 1 0 21.310 8.350"/><path d="M16.240 7.760A6 6 0 1 0 8.230 16.670"/><path d="M12 18h.01"/><path d="M17.990 11.660A6 6 0 0 1 15.770 16.670"/><circle cx="12" cy="12" r="2"/><path d="m13.410 10.590 5.660-5.660"/></g></svg>
<div class="b" style="left:1072px;top:245px;width:435px;height:641px;background:#fff;border:2px solid #cfcfcf;border-radius:8px;box-sizing:border-box;box-shadow:0 0 32px rgba(0,0,0,0.16)"></div>
<div class="b" style="left:1074px;top:262px;width:431px;height:72px;background:#f4f4f4;"></div>
<div class="b" style="left:1074px;top:422px;width:431px;height:2px;background:#e2e2e2;"></div>
<div class="b" style="left:1074px;top:528px;width:431px;height:2px;background:#e2e2e2;"></div>
<div class="b" style="left:1074px;top:706px;width:431px;height:2px;background:#e2e2e2;"></div>
<svg class="i" style="left:1106.00px;top:282.00px;" width="32" height="32" viewBox="0 0 24 24" fill="none" stroke="#181d1f" stroke-width="2.3" stroke-linecap="round" stroke-linejoin="round"><g><path d="m5 12 7-7 7 7"/><path d="M12 19V5"/></g></svg>
<div class="t" style="left:1170.00px;top:281.84px;font-size:25px;line-height:35px;color:#181d1f;letter-spacing:-0.111px;-webkit-text-stroke:0.220px currentColor;">Sort Ascending</div>
<svg class="i" style="left:1106.00px;top:354.00px;" width="32" height="32" viewBox="0 0 24 24" fill="none" stroke="#181d1f" stroke-width="2.3" stroke-linecap="round" stroke-linejoin="round"><g><path d="M12 5v14"/><path d="m19 12-7 7-7-7"/></g></svg>
<div class="t" style="left:1170.00px;top:353.84px;font-size:25px;line-height:35px;color:#181d1f;letter-spacing:-0.221px;-webkit-text-stroke:0.220px currentColor;">Sort Descending</div>
<svg class="i" style="left:1106.00px;top:460.00px;" width="32" height="32" viewBox="0 0 24 24" fill="none" stroke="#181d1f" stroke-width="2.3" stroke-linecap="round" stroke-linejoin="round"><g><path d="M12 17v5"/><path d="M9 10.76a2 2 0 0 1-1.11 1.79l-1.78.9A2 2 0 0 0 5 15.24V16a1 1 0 0 0 1 1h12a1 1 0 0 0 1-1v-.76a2 2 0 0 0-1.11-1.79l-1.78-.9A2 2 0 0 1 15 10.76V7a1 1 0 0 1 1-1 2 2 0 0 0 0-4H8a2 2 0 0 0 0 4 1 1 0 0 1 1 1z"/></g></svg>
<div class="t" style="left:1170.00px;top:459.84px;font-size:25px;line-height:35px;color:#181d1f;letter-spacing:-0.219px;-webkit-text-stroke:0.220px currentColor;">Pin Column</div>
<div class="t" style="left:1170.00px;top:565.84px;font-size:25px;line-height:35px;color:#181d1f;letter-spacing:-0.182px;-webkit-text-stroke:0.220px currentColor;">Autosize This Column</div>
<div class="t" style="left:1170.00px;top:637.84px;font-size:25px;line-height:35px;color:#181d1f;letter-spacing:-0.044px;-webkit-text-stroke:0.220px currentColor;">Autosize All Columns</div>
<svg class="i" style="left:1106.00px;top:744.00px;" width="32" height="32" viewBox="0 0 24 24" fill="none" stroke="#181d1f" stroke-width="2.3" stroke-linecap="round" stroke-linejoin="round"><g><rect width="18" height="18" x="3" y="3" rx="2"/><path d="M3 9h18"/><path d="M9 21V9"/></g></svg>
<div class="t" style="left:1170.00px;top:743.84px;font-size:25px;line-height:35px;color:#181d1f;letter-spacing:-0.482px;-webkit-text-stroke:0.220px currentColor;">Choose Columns</div>
<div class="t" style="left:1170.00px;top:815.84px;font-size:25px;line-height:35px;color:#181d1f;letter-spacing:-0.534px;-webkit-text-stroke:0.220px currentColor;">Reset Columns</div>
<svg class="i" style="left:1456.00px;top:460.00px;" width="32" height="32" viewBox="0 0 24 24" fill="none" stroke="#181d1f" stroke-width="2.3" stroke-linecap="round" stroke-linejoin="round"><g><path d="m9 18 6-6-6-6"/></g></svg>
</div></body></html>
